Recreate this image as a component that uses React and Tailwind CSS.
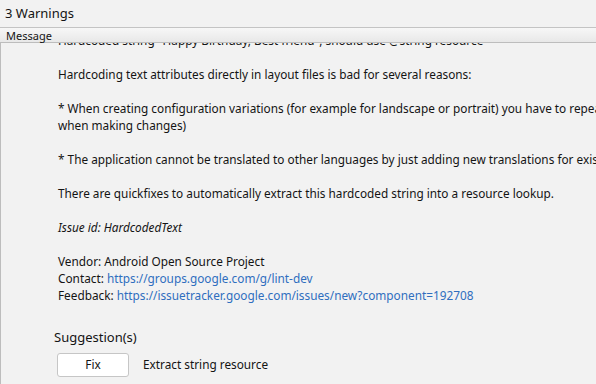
import React from "react";

const Link = ({ children }) => <span className="text-[#2f6ebf]">{children}</span>;

export default function App() {
    return (
        <div
            className="w-[596px] h-[384px] overflow-hidden bg-[#f2f2f2] text-[#141414] flex flex-col"
            style={{ fontFamily: '"Noto Sans", "Open Sans", sans-serif' }}
        >
            <div className="h-[28px] shrink-0 flex items-center px-[5px] text-[13px] border-b border-[#c4c4c4]">
                3 Warnings
            </div>
            <div className="h-[15px] shrink-0 flex items-center px-[6px] text-[11px] leading-none bg-gradient-to-b from-[#f7f7f7] to-[#e8e8e8] border-b border-[#bdbdbd]">
                Message
            </div>
            <div className="flex-1 overflow-hidden border-l border-[#bdbdbd]">
                <div className="mt-[-11px] pl-[57px] text-[11.8px] leading-[17px] whitespace-nowrap">
                    <p>Hardcoded string "Happy Birthday, Best friend", should use @string resource</p>
                    <p className="mt-[17px]">Hardcoding text attributes directly in layout files is bad for several reasons:</p>
                    <p className="mt-[17px]">* When creating configuration variations (for example for landscape or portrait) you have to repeat the actual text (and keep it up to date</p>
                    <p>when making changes)</p>
                    <p className="mt-[17px]">* The application cannot be translated to other languages by just adding new translations for existing string resources.</p>
                    <p className="mt-[17px]">There are quickfixes to automatically extract this hardcoded string into a resource lookup.</p>
                    <p className="mt-[17px] italic">Issue id: HardcodedText</p>
                    <p className="mt-[17px]">Vendor: Android Open Source Project</p>
                    <p>Contact: <Link>https://groups.google.com/g/lint-dev</Link></p>
                    <p>Feedback: <Link>https://issuetracker.google.com/issues/new?component=192708</Link></p>
                </div>
                <div className="pl-[53px] mt-[24px] text-[13px] leading-[18px]">Suggestion(s)</div>
                <div className="pl-[56px] mt-[7px] flex items-center gap-[14px]">
                    <button className="w-[72px] h-[24px] bg-white border border-[#c6c6c6] rounded-[3px] text-[11.8px]">
                        Fix
                    </button>
                    <span className="text-[11.8px]">Extract string resource</span>
                </div>
            </div>
        </div>
    );
}
